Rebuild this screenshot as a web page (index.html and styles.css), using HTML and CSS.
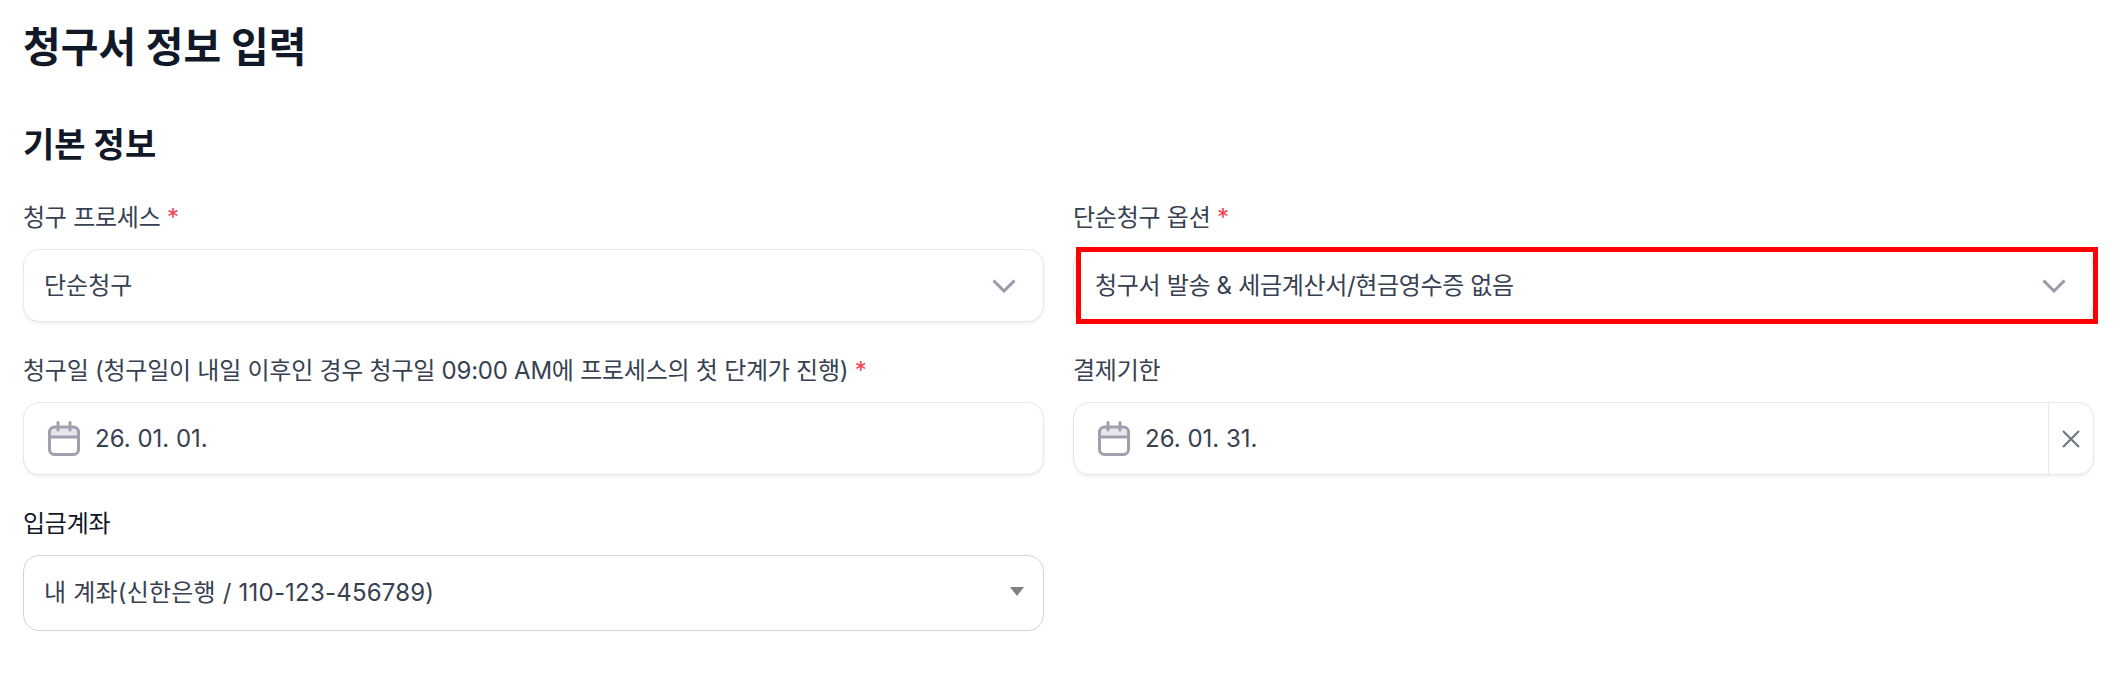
FILE: index.html
```html
<!DOCTYPE html>
<html lang="ko">
<head>
<meta charset="utf-8">
<title>청구서 정보 입력</title>
<link rel="stylesheet" href="styles.css">
</head>
<body>
<main class="page">
  <h1 class="title">청구서 정보 입력</h1>
  <h2 class="section">기본 정보</h2>
  <div class="grid">
    <div class="item">
      <label class="label">청구 프로세스 <span class="req">*</span></label>
      <div class="field">
        <span class="value">단순청구</span>
        <svg class="chev" viewBox="0 0 24 14" fill="none"><path d="M1.5 1.5 12 12 22.5 1.5"/></svg>
      </div>
    </div>
    <div class="item">
      <label class="label">단순청구 옵션 <span class="req">*</span></label>
      <div class="field">
        <span class="value tight">청구서 발송 &amp; 세금계산서/현금영수증 없음</span>
        <svg class="chev" viewBox="0 0 24 14" fill="none"><path d="M1.5 1.5 12 12 22.5 1.5"/></svg>
        <div class="highlight"></div>
      </div>
    </div>
    <div class="item">
      <label class="label">청구일 (청구일이 내일 이후인 경우 청구일 09:00 AM에 프로세스의 첫 단계가 진행) <span class="req">*</span></label>
      <div class="field date">
        <svg class="cal" viewBox="0 0 32 35" fill="none"><path class="band" d="M2 16v-5a5 5 0 0 1 5-5h18a5 5 0 0 1 5 5v5z"/><path d="M10 1.5V9M22 1.5V9M6.500 6h19a5 5 0 0 1 5 5v17.500a5 5 0 0 1-5 5h-19a5 5 0 0 1-5-5V11a5 5 0 0 1 5-5zM1.500 16h29"/></svg>
        <span class="value">26. 01. 01.</span>
      </div>
    </div>
    <div class="item">
      <label class="label">결제기한</label>
      <div class="field date">
        <svg class="cal" viewBox="0 0 32 35" fill="none"><path class="band" d="M2 16v-5a5 5 0 0 1 5-5h18a5 5 0 0 1 5 5v5z"/><path d="M10 1.5V9M22 1.5V9M6.500 6h19a5 5 0 0 1 5 5v17.500a5 5 0 0 1-5 5h-19a5 5 0 0 1-5-5V11a5 5 0 0 1 5-5zM1.500 16h29"/></svg>
        <span class="value">26. 01. 31.</span>
        <div class="clear"><svg class="x" viewBox="0 0 18 18" fill="none"><path d="M1 1l16 16M17 1 1 17"/></svg></div>
      </div>
    </div>
    <div class="item account">
      <label class="label strong">입금계좌</label>
      <div class="field select">
        <span class="value wide">내 계좌(신한은행 / 110-123-456789)</span>
        <span class="tri"></span>
      </div>
    </div>
  </div>
</main>
</body>
</html>
```
FILE: styles.css
```css
* { box-sizing: border-box; }
html, body { margin: 0; background: #fff; }
body { font-family: Inter, "Noto Sans CJK KR", sans-serif; color: #111827; }
.page { padding: 17px 27px 0 23px; }
.title { margin: 0; font-size: 41px; line-height: 60px; font-weight: 700; color: #111827; }
.section { margin: 44px 0 31px; font-size: 34px; line-height: 48px; font-weight: 700; color: #111827; }
.grid { display: grid; grid-template-columns: 1fr 1fr; column-gap: 29px; row-gap: 31px; }
.item { display: flex; flex-direction: column; gap: 13px; }
.label { font-size: 24px; line-height: 36px; font-weight: 400; color: #374151; letter-spacing: -0.25px; }
.label.strong { color: #111827; }
.req { color: #f5404f; }
.field { position: relative; display: flex; align-items: center; height: 73px; padding: 0 20px; background: #fff; border: 1px solid #e5e7eb; border-radius: 16px; box-shadow: 0 2px 3px rgba(0,0,0,.06); }
.value { font-size: 24px; line-height: 36px; color: #374151; flex: 1; }
.value.tight { margin-left: 1px; letter-spacing: -0.33px; }
.value.wide { letter-spacing: 0.2px; }
.chev { width: 24px; height: 14px; flex: none; margin-right: 7px; }
.chev path { stroke: #9a9aaa; stroke-width: 3; }
.date { padding: 0 0 0 24px; gap: 15px; }
.cal { width: 32px; height: 35px; flex: none; }
.cal path { stroke: #9f9fad; stroke-width: 3; stroke-linecap: round; stroke-linejoin: round; }
.cal .band { fill: #e6e6ec; stroke: none; }
.clear { align-self: stretch; width: 45px; flex: none; display: flex; align-items: center; justify-content: center; border-left: 1px solid #e5e7eb; }
.x { width: 18px; height: 18px; }
.x path { stroke: #6b7280; stroke-width: 2; }
.highlight { position: absolute; top: -3px; left: 2px; right: -5px; bottom: -3px; border: 5px solid #f00; pointer-events: none; }
.account { gap: 13px; }
.select { height: 76px; border-color: #d1d5db; box-shadow: none; }
.tri { width: 0; height: 0; flex: none; margin-right: -1px; border-left: 7px solid transparent; border-right: 7px solid transparent; border-top: 9px solid #808080; margin-bottom: 3px; }
```
